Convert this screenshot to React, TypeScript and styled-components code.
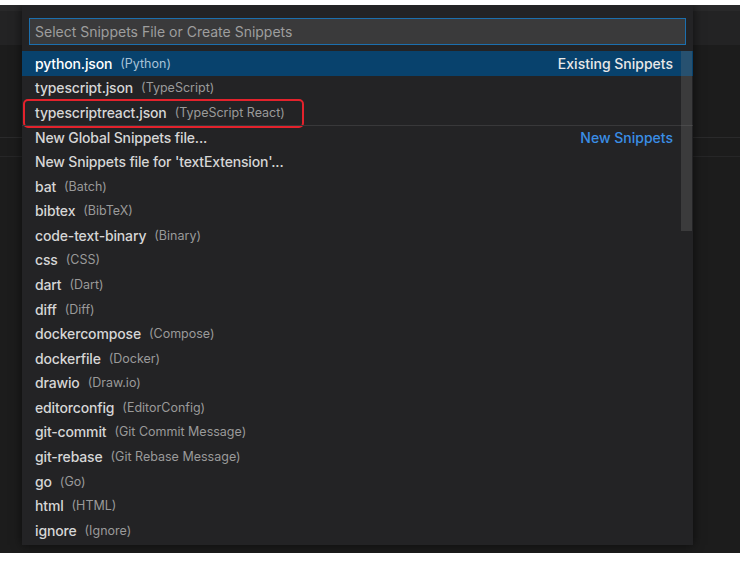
import React from "react";
import styled, { createGlobalStyle } from "styled-components";

const GlobalStyle = createGlobalStyle`
  html, body {
    margin: 0;
    padding: 0;
    background: #ffffff;
  }
  body {
    font-family: Inter, "Noto Sans", "Liberation Sans", sans-serif;
    -webkit-font-smoothing: antialiased;
  }
`;

const Frame = styled.div`
  margin-top: 5px;
  width: 740px;
  height: 548px;
  background: #1c1c1c;
  position: relative;
  overflow: hidden;
  display: flex;
  flex-direction: column;
`;

const TabStrip = styled.div`
  height: 40px;
  background: #232324;
  border-top: 6px solid #29292a;
  box-sizing: border-box;
`;

const EditorArea = styled.div`
  flex: 1;
  display: flex;
  flex-direction: column;
  & > .rule {
    margin-top: 92px;
    height: 18px;
    border-top: 1px solid #2a2a2b;
    border-bottom: 1px solid #262627;
  }
`;

const Picker = styled.div`
  position: absolute;
  left: 22px;
  top: 0;
  width: 671px;
  height: 540px;
  background: #232325;
  box-shadow: 0 0 10px rgba(0, 0, 0, 0.6);
  display: flex;
  flex-direction: column;
`;

const InputWrap = styled.div`
  padding: 13px 7px 6px 7px;
`;

const Input = styled.div`
  height: 27px;
  box-sizing: border-box;
  background: #3a3a3b;
  border: 1px solid #1c6fae;
  color: #9e9e9e;
  font-size: 14px;
  line-height: 25px;
  padding-left: 5px;
  white-space: nowrap;
`;

const List = styled.div`
  position: relative;
  flex: 1;
  overflow: hidden;
`;

const Scrollbar = styled.div`
  position: absolute;
  right: 1px;
  top: 0;
  width: 11px;
  height: 180px;
  background: rgba(121, 121, 121, 0.28);
`;

const Row = styled.div<{ $selected?: boolean; $divider?: boolean; $marked?: boolean }>`
  position: relative;
  height: 24.58px;
  box-sizing: border-box;
  display: flex;
  align-items: center;
  padding: 0 20px 0 13px;
  font-size: 14px;
  white-space: nowrap;
  background: ${(p) => (p.$selected ? "#08426d" : "transparent")};
  border-top: ${(p) => (p.$divider ? "1px solid #38383a" : "none")};
  color: ${(p) => (p.$selected ? "#ffffff" : "#d6d6d6")};

  ${(p) =>
    p.$marked &&
    `
    &::after {
      content: "";
      position: absolute;
      left: 1px;
      top: -1px;
      width: 281px;
      height: 29px;
      box-sizing: border-box;
      border: 2.5px solid #e3222c;
      border-radius: 5px;
    }
  `}
`;

const Label = styled.span`
  font-weight: 500;
  letter-spacing: -0.15px;
`;

const Desc = styled.span<{ $selected?: boolean }>`
  margin-left: 8px;
  font-size: 12.5px;
  color: ${(p) => (p.$selected ? "#a9c2d8" : "#9a9a9a")};
`;

const Group = styled.span<{ $accent?: boolean }>`
  margin-left: auto;
  font-weight: 500;
  color: ${(p) => (p.$accent ? "#3a8ee6" : "#e8e8e8")};
`;

type Item = {
  label: string;
  desc?: string;
  group?: string;
  accent?: boolean;
  selected?: boolean;
  divider?: boolean;
  marked?: boolean;
};

const items: Item[] = [
  { label: "python.json", desc: "(Python)", group: "Existing Snippets", selected: true },
  { label: "typescript.json", desc: "(TypeScript)" },
  { label: "typescriptreact.json", desc: "(TypeScript React)", marked: true },
  { label: "New Global Snippets file...", group: "New Snippets", accent: true, divider: true },
  { label: "New Snippets file for 'textExtension'..." },
  { label: "bat", desc: "(Batch)" },
  { label: "bibtex", desc: "(BibTeX)" },
  { label: "code-text-binary", desc: "(Binary)" },
  { label: "css", desc: "(CSS)" },
  { label: "dart", desc: "(Dart)" },
  { label: "diff", desc: "(Diff)" },
  { label: "dockercompose", desc: "(Compose)" },
  { label: "dockerfile", desc: "(Docker)" },
  { label: "drawio", desc: "(Draw.io)" },
  { label: "editorconfig", desc: "(EditorConfig)" },
  { label: "git-commit", desc: "(Git Commit Message)" },
  { label: "git-rebase", desc: "(Git Rebase Message)" },
  { label: "go", desc: "(Go)" },
  { label: "html", desc: "(HTML)" },
  { label: "ignore", desc: "(Ignore)" },
];

const App = () => {
  return (
    <>
      <GlobalStyle />
      <Frame>
        <TabStrip />
        <EditorArea>
          <div className="rule" />
        </EditorArea>
        <Picker>
          <InputWrap>
            <Input>Select Snippets File or Create Snippets</Input>
          </InputWrap>
          <List>
            {items.map((it) => (
              <Row
                key={it.label}
                $selected={it.selected}
                $divider={it.divider}
                $marked={it.marked}
              >
                <Label>{it.label}</Label>
                {it.desc && <Desc $selected={it.selected}>{it.desc}</Desc>}
                {it.group && <Group $accent={it.accent}>{it.group}</Group>}
              </Row>
            ))}
            <Scrollbar />
          </List>
        </Picker>
      </Frame>
    </>
  );
};

export default App;
